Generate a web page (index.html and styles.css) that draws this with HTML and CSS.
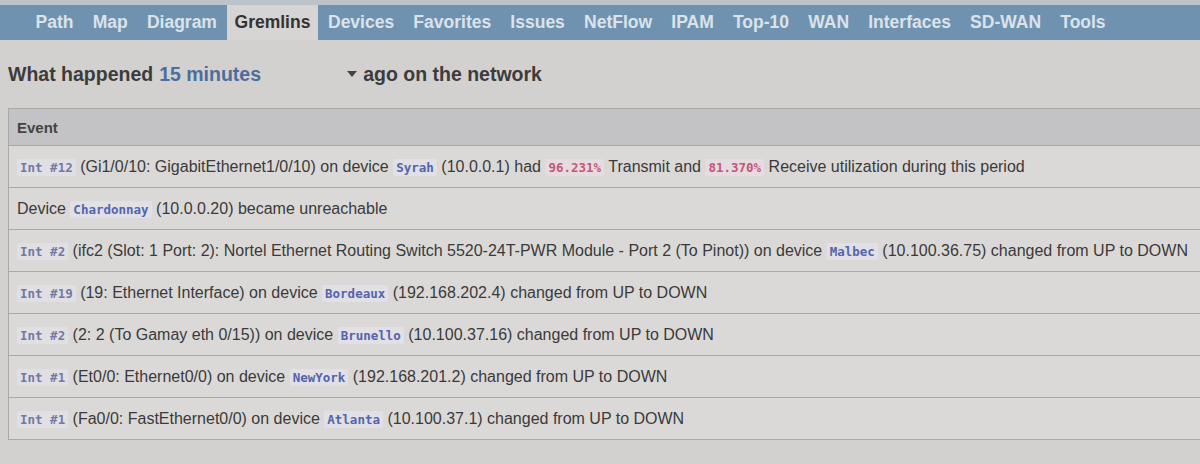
FILE: index.html
```html
<!DOCTYPE html>
<html lang="en">
<head>
  <meta charset="UTF-8">
  <meta name="viewport" content="width=device-width, initial-scale=1.0">
  <title>Gremlins</title>
  <link rel="stylesheet" href="styles.css">
</head>
<body>
  <nav class="menu">
    <a class="menu-item">Path</a>
    <a class="menu-item">Map</a>
    <a class="menu-item">Diagram</a>
    <a class="menu-item active">Gremlins</a>
    <a class="menu-item">Devices</a>
    <a class="menu-item">Favorites</a>
    <a class="menu-item">Issues</a>
    <a class="menu-item">NetFlow</a>
    <a class="menu-item">IPAM</a>
    <a class="menu-item">Top-10</a>
    <a class="menu-item">WAN</a>
    <a class="menu-item">Interfaces</a>
    <a class="menu-item">SD-WAN</a>
    <a class="menu-item">Tools</a>
  </nav>

  <div class="container">
    <h2 class="summary">
      What happened
      <span class="period">15 minutes <span class="caret"></span></span>
      ago on the network
    </h2>

    <table class="events">
      <thead>
        <tr><th>Event</th></tr>
      </thead>
      <tbody>
        <tr><td><code class="int">Int #12</code> (Gi1/0/10: GigabitEthernet1/0/10) on device <code class="dev">Syrah</code> (10.0.0.1) had <code class="pct">96.231%</code> Transmit and <code class="pct">81.370%</code> Receive utilization during this period</td></tr>
        <tr><td>Device <code class="dev">Chardonnay</code> (10.0.0.20) became unreachable</td></tr>
        <tr><td><code class="int">Int #2</code> (ifc2 (Slot: 1 Port: 2): Nortel Ethernet Routing Switch 5520-24T-PWR Module - Port 2 (To Pinot)) on device <code class="dev">Malbec</code> (10.100.36.75) changed from UP to DOWN</td></tr>
        <tr><td><code class="int">Int #19</code> (19: Ethernet Interface) on device <code class="dev">Bordeaux</code> (192.168.202.4) changed from UP to DOWN</td></tr>
        <tr><td><code class="int">Int #2</code> (2: 2 (To Gamay eth 0/15)) on device <code class="dev">Brunello</code> (10.100.37.16) changed from UP to DOWN</td></tr>
        <tr><td><code class="int">Int #1</code> (Et0/0: Ethernet0/0) on device <code class="dev">NewYork</code> (192.168.201.2) changed from UP to DOWN</td></tr>
        <tr><td><code class="int">Int #1</code> (Fa0/0: FastEthernet0/0) on device <code class="dev">Atlanta</code> (10.100.37.1) changed from UP to DOWN</td></tr>
      </tbody>
    </table>
  </div>
</body>
</html>
```

FILE: styles.css
```css
body{
  margin: 0;
  background: #d2d1cf;
  color: #3a3a3a;
  font-family: "Liberation Sans", Arial, sans-serif;
}

.menu{
  display: flex;
  height: 35px;
  padding-left: 26px;
  border-top: 5px solid #bcc4ca;
  background: #6f92b1;
}

.menu-item{
  padding: 0 9.6px;
  font-size: 17.5px;
  font-weight: bold;
  line-height: 35px;
  color: #dbe3ea;
  cursor: pointer;
}

.menu-item.active{
  background: #d6d5d3;
  color: #333;
  padding: 0 8px;
}

.container{
  padding: 0 0 0 8px;
}

.summary{
  display: flex;
  align-items: center;
  gap: 6px;
  height: 68px;
  margin: 0;
  font-size: 19.5px;
  font-weight: bold;
  color: #3c3c3c;
}

.summary .period{
  display: inline-flex;
  align-items: center;
  justify-content: space-between;
  width: 198px;
  color: #4d6d9c;
}

.summary .caret{
  width: 0;
  height: 0;
  border-left: 5px solid transparent;
  border-right: 5px solid transparent;
  border-top: 6px solid #444;
}

.events{
  width: 1200px;
  border-collapse: collapse;
  font-size: 16px;
  border: 1px solid #a9a9a9;
  border-right: none;
}

.events th{
  height: 36px;
  padding: 0 8px;
  text-align: left;
  font-size: 15px;
  font-weight: bold;
  color: #444;
  background: #c3c3c5;
}

.events td{
  height: 41px;
  padding: 0 8px;
  white-space: nowrap;
  background: #dad9d7;
  border-top: 1px solid #a9a9a9;
  color: #3a3a3a;
}

.events code{
  padding: 1px 3px;
  font-family: "DejaVu Sans Mono", monospace;
  font-size: 12.5px;
  font-weight: bold;
  border-radius: 2px;
}

.events .int{
  color: #7478a2;
  background: #e0e0e4;
}

.events .dev{
  color: #5365ab;
  background: #e0e0e6;
}

.events .pct{
  color: #c5567a;
  background: #e6dcdf;
}
```
